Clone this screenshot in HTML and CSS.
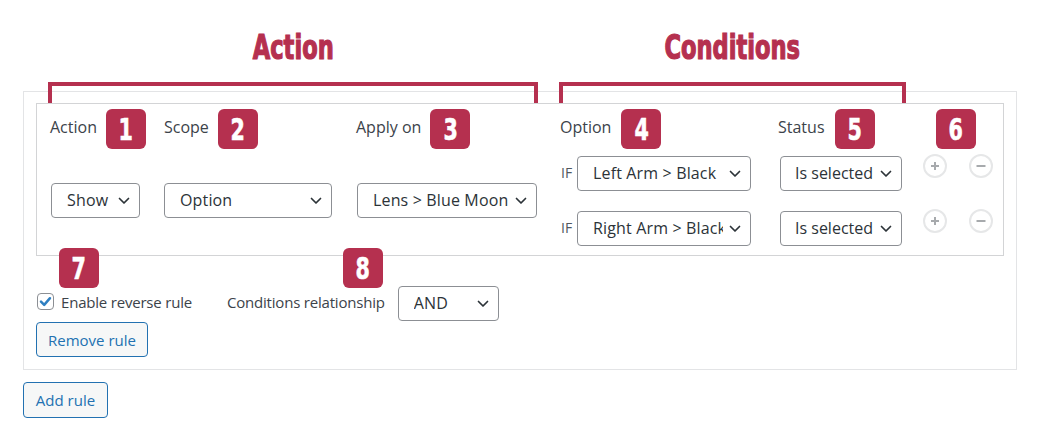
FILE: index.html
```html
<!DOCTYPE html>
<html>
<head>
<meta charset="utf-8">
<link rel="stylesheet" href="styles.css">
</head>
<body>
<div class="page">
  <div class="annot">
    <div class="group group-action">
      <div class="title"><span>Action</span></div>
      <div class="bracket"></div>
    </div>
    <div class="group group-cond">
      <div class="title"><span>Conditions</span></div>
      <div class="bracket"></div>
    </div>
  </div>

  <div class="rule">
    <div class="rule-main">
      <div class="col col-action">
        <div class="head"><span class="label">Action</span><span class="badge"><span>1</span></span></div>
        <div class="body">
          <div class="select w-show"><span class="val">Show</span><svg class="chev" width="12" height="8" viewBox="0 0 12 8"><path d="M1.5 1.5 L6 6 L10.5 1.5"/></svg></div>
        </div>
      </div>
      <div class="col col-scope">
        <div class="head"><span class="label">Scope</span><span class="badge"><span>2</span></span></div>
        <div class="body">
          <div class="select w-option"><span class="val">Option</span><svg class="chev" width="12" height="8" viewBox="0 0 12 8"><path d="M1.5 1.5 L6 6 L10.5 1.5"/></svg></div>
        </div>
      </div>
      <div class="col col-apply">
        <div class="head"><span class="label">Apply on</span><span class="badge"><span>3</span></span></div>
        <div class="body">
          <div class="select w-lens"><span class="val">Lens &gt; Blue Moon</span><svg class="chev" width="12" height="8" viewBox="0 0 12 8"><path d="M1.5 1.5 L6 6 L10.5 1.5"/></svg></div>
        </div>
      </div>
      <div class="col col-cond">
        <div class="head cond-head">
          <div class="h-option"><span class="label">Option</span><span class="badge"><span>4</span></span></div>
          <div class="h-status"><span class="label">Status</span><span class="badge"><span>5</span></span></div>
          <span class="badge"><span>6</span></span>
        </div>
        <div class="cond-rows">
          <div class="cond-row">
            <span class="if">IF</span>
            <div class="select w-arm"><span class="val">Left Arm &gt; Black</span><svg class="chev" width="12" height="8" viewBox="0 0 12 8"><path d="M1.5 1.5 L6 6 L10.5 1.5"/></svg></div>
            <div class="select w-status"><span class="val">Is selected</span><svg class="chev" width="12" height="8" viewBox="0 0 12 8"><path d="M1.5 1.5 L6 6 L10.5 1.5"/></svg></div>
            <span class="circ plus"><svg width="10" height="10" viewBox="0 0 10 10"><path d="M5 1v8M1 5h8"/></svg></span>
            <span class="circ minus"><svg width="10" height="10" viewBox="0 0 10 10"><path d="M0.5 5h9"/></svg></span>
          </div>
          <div class="cond-row">
            <span class="if">IF</span>
            <div class="select w-arm"><span class="val">Right Arm &gt; Black</span><svg class="chev" width="12" height="8" viewBox="0 0 12 8"><path d="M1.5 1.5 L6 6 L10.5 1.5"/></svg></div>
            <div class="select w-status"><span class="val">Is selected</span><svg class="chev" width="12" height="8" viewBox="0 0 12 8"><path d="M1.5 1.5 L6 6 L10.5 1.5"/></svg></div>
            <span class="circ plus"><svg width="10" height="10" viewBox="0 0 10 10"><path d="M5 1v8M1 5h8"/></svg></span>
            <span class="circ minus"><svg width="10" height="10" viewBox="0 0 10 10"><path d="M0.5 5h9"/></svg></span>
          </div>
        </div>
      </div>
    </div>

    <div class="rule-footer">
      <span class="check"><svg width="15" height="15" viewBox="0 0 15 15"><path d="M3 7.6 L6.2 10.8 L12 4.2"/></svg></span>
      <span class="foot-label reverse">Enable reverse rule</span>
      <span class="foot-label relation">Conditions relationship</span>
      <div class="select w-and"><span class="val">AND</span><svg class="chev" width="12" height="8" viewBox="0 0 12 8"><path d="M1.5 1.5 L6 6 L10.5 1.5"/></svg></div>
    </div>
    <button class="btn btn-remove">Remove rule</button>

    <span class="badge badge-7"><span>7</span></span>
    <span class="badge badge-8"><span>8</span></span>
  </div>

  <button class="btn btn-add">Add rule</button>
</div>
</body>
</html>
```

FILE: styles.css
```css
* { box-sizing: border-box; }

html, body {
  margin: 0;
  padding: 0;
  background: #ffffff;
}

body {
  font-family: "Open Sans", "Noto Sans", sans-serif;
  color: #3c434a;
}

.page {
  width: 1041px;
  height: 447px;
  padding-left: 23px;
}

/* ---------- annotations ---------- */
.annot {
  display: flex;
  height: 91px;
}

.group {
  position: relative;
  z-index: 2;
  display: flex;
  flex-direction: column;
  height: 91px;
}

.group-action { margin-left: 25px; width: 490px; }
.group-cond { margin-left: 21px; width: 347px; }

.title {
  flex: none;
  height: 82px;
  padding-top: 31px;
  text-align: center;
  line-height: 33px;
}

.title span {
  display: inline-block;
  font-family: "DejaVu Sans Condensed", "DejaVu Sans", sans-serif;
  font-stretch: condensed;
  font-weight: bold;
  font-size: 33px;
  color: #b5304f;
  -webkit-text-stroke: 1.2px #b5304f;
  transform: scaleX(0.76);
}

.bracket {
  height: 21px;
  flex: none;
  border: 4px solid #b5304f;
  border-bottom: none;
}

/* ---------- badges ---------- */
.badge {
  display: inline-flex;
  align-items: center;
  justify-content: center;
  width: 40px;
  height: 40px;
  border-radius: 6px;
  background: #b5304f;
  flex: none;
}

.badge span {
  display: inline-block;
  font-family: "DejaVu Sans Condensed", "DejaVu Sans", sans-serif;
  font-stretch: condensed;
  font-weight: bold;
  font-size: 31px;
  line-height: 30px;
  color: #ffffff;
  -webkit-text-stroke: 0.6px #ffffff;
  transform: scaleX(0.74);
}

/* ---------- rule box ---------- */
.rule {
  position: relative;
  width: 994px;
  border: 1px solid #e3e4e6;
  padding: 11px 12px 12px 12px;
  background: #fff;
}

.rule-main {
  display: flex;
  border: 1px solid #d3d4d6;
  padding: 5px 0 9px 13px;
}

.col {
  display: flex;
  flex-direction: column;
}

.col-action { width: 114px; }
.col-scope { width: 192px; }
.col-apply { width: 204px; }
.col-cond { flex: 1; }

.head {
  display: flex;
  align-items: center;
  gap: 9px;
  height: 40px;
}

.label {
  font-size: 16px;
  color: #3c434a;
  margin-bottom: 4px;
}

.body {
  flex: 1;
  display: flex;
  align-items: center;
  padding-top: 6px;
}

.cond-head { gap: 0; }
.h-option, .h-status {
  display: flex;
  align-items: center;
  gap: 10px;
}
.h-option { width: 218px; }
.h-status { width: 158px; }

.cond-rows {
  margin-top: 7px;
  display: flex;
  flex-direction: column;
  gap: 20px;
}

.cond-row {
  display: flex;
  align-items: flex-start;
}

.if {
  width: 16px;
  margin-left: 1px;
  font-size: 14px;
  line-height: 33px;
  color: #50575e;
}

/* ---------- select ---------- */
.select {
  display: inline-flex;
  align-items: center;
  height: 35px;
  border: 1px solid #8c8f94;
  border-radius: 4px;
  padding: 0 9px 0 15px;
  background: #fff;
  font-size: 16px;
  letter-spacing: 0.15px;
  color: #2c3338;
  flex: none;
}

.select .val {
  flex: 1;
  min-width: 0;
  overflow: hidden;
  white-space: nowrap;
  margin-bottom: 1px;
}

.chev {
  flex: none;
  margin-left: 6px;
  fill: none;
  stroke: #2c3338;
  stroke-width: 1.7;
  stroke-linecap: round;
  stroke-linejoin: round;
}

.w-show { width: 89px; margin-left: 1px; }
.w-option { width: 168px; }
.w-lens { width: 180px; margin-left: 1px; }
.w-arm { width: 174px; }
.w-status { width: 122px; margin-left: 29px; letter-spacing: 0; padding-left: 14px; }
.w-status .val { overflow: visible; }
.w-status .chev { margin-left: 4px; }
.w-and { width: 101px; }

/* ---------- plus / minus ---------- */
.circ {
  display: inline-flex;
  align-items: center;
  justify-content: center;
  width: 24px;
  height: 24px;
  border-radius: 50%;
  border: 2px solid #e6e7e8;
  background: #fff;
  margin-top: -2px;
  flex: none;
}

.circ svg {
  fill: none;
  stroke: #a7aaad;
  stroke-width: 2;
}

.plus { margin-left: 21px; }
.minus { margin-left: 22px; }

/* ---------- footer ---------- */
.rule-footer {
  display: flex;
  align-items: center;
  margin-top: 30px;
  padding-left: 1px;
}

.check {
  display: inline-flex;
  align-items: center;
  justify-content: center;
  width: 17px;
  height: 17px;
  border: 1px solid #8c8f94;
  border-radius: 4px;
  margin-bottom: 4px;
  background: #fff;
}

.check svg {
  fill: none;
  stroke: #2f7fc1;
  stroke-width: 2.5;
  stroke-linecap: round;
  stroke-linejoin: round;
}

.foot-label {
  font-size: 15px;
  color: #3c434a;
  margin-bottom: 4px;
}

.reverse { margin-left: 7px; letter-spacing: -0.2px; }
.relation { margin-left: 35px; letter-spacing: -0.2px; }
.w-and { margin-left: 13px; }

/* ---------- buttons ---------- */
.btn {
  display: block;
  font-family: "Open Sans", "Noto Sans", sans-serif;
  font-size: 15px;
  color: #2271b1;
  background: #f6f7f7;
  border: 1px solid #2271b1;
  border-radius: 4px;
  padding: 0;
  cursor: pointer;
}

.btn-remove {
  margin-top: 1px;
  width: 112px;
  height: 35px;
}

.btn-add {
  margin-top: 12px;
  width: 85px;
  height: 36px;
}

/* ---------- overlay badges ---------- */
.badge-7 {
  position: absolute;
  left: 35px;
  top: 156px;
}

.badge-8 {
  position: absolute;
  left: 319px;
  top: 156px;
}
```
